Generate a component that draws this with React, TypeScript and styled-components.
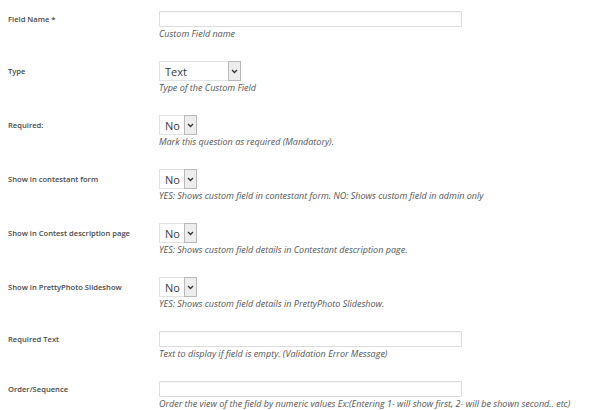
import styled, { createGlobalStyle } from "styled-components";

const GlobalStyle = createGlobalStyle`
  body {
    margin: 0;
    background: #ffffff;
    font-family: "Open Sans", "DejaVu Sans", sans-serif;
  }
`;

type FieldRow = {
  label: string;
  kind: "input" | "select";
  value?: string;
  width: number;
  help: string;
};

const rows: FieldRow[] = [
  { label: "Field Name *", kind: "input", width: 303, help: "Custom Field name" },
  { label: "Type", kind: "select", value: "Text", width: 82, help: "Type of the Custom Field" },
  { label: "Required:", kind: "select", value: "No", width: 38, help: "Mark this question as required (Mandatory)." },
  {
    label: "Show in contestant form",
    kind: "select",
    value: "No",
    width: 38,
    help: "YES: Shows custom field in contestant form. NO: Shows custom field in admin only",
  },
  {
    label: "Show in Contest description page",
    kind: "select",
    value: "No",
    width: 38,
    help: "YES: Shows custom field details in Contestant description page.",
  },
  {
    label: "Show in PrettyPhoto Slideshow",
    kind: "select",
    value: "No",
    width: 38,
    help: "YES: Shows custom field details in PrettyPhoto Slideshow.",
  },
  {
    label: "Required Text",
    kind: "input",
    width: 303,
    help: "Text to display if field is empty. (Validation Error Message)",
  },
  {
    label: "Order/Sequence",
    kind: "input",
    width: 303,
    help: "Order the view of the field by numeric values Ex:(Entering 1- will show first, 2- will be shown second.. etc)",
  },
];

function Chevron() {
  return (
    <svg width="7" height="5" viewBox="0 0 7 5">
      <path d="M1 1 L3.5 3.5 L6 1" fill="none" stroke="#333" strokeWidth="1.3" />
    </svg>
  );
}

export default function App() {
  return (
    <>
      <GlobalStyle />
      <Form>
        {rows.map((row) => (
          <Row key={row.label}>
            <Label>{row.label}</Label>
            {row.kind === "input" ? (
              <TextInput type="text" $width={row.width} />
            ) : (
              <SelectBox $width={row.width}>
                <SelectValue>{row.value}</SelectValue>
                <ArrowBox>
                  <Chevron />
                </ArrowBox>
              </SelectBox>
            )}
            <Help>{row.help}</Help>
          </Row>
        ))}
      </Form>
    </>
  );
}

const Form = styled.div`
  padding: 11px 0 0 8px;
`;

const Row = styled.div`
  display: grid;
  grid-template-columns: 151px auto;
  grid-template-areas:
    "label control"
    ". help";
  align-items: center;
  margin-bottom: 20px;
`;

const Label = styled.div`
  grid-area: label;
  font-size: 7.6px;
  font-weight: 600;
  color: #4a4a4a;
`;

const TextInput = styled.input<{ $width: number }>`
  grid-area: control;
  box-sizing: border-box;
  width: ${(p) => p.$width}px;
  height: 16px;
  margin: 0;
  padding: 0 4px;
  border: 1px solid #dcdcdc;
  border-radius: 1px;
  box-shadow: inset 0 1px 1px rgba(0, 0, 0, 0.04);
  background: #fff;
`;

const SelectBox = styled.div<{ $width: number }>`
  grid-area: control;
  box-sizing: border-box;
  width: ${(p) => p.$width}px;
  height: 20px;
  display: flex;
  align-items: center;
  border: 1px solid #e2e2e2;
  background: #fff;
`;

const SelectValue = styled.span`
  flex: 1;
  padding-left: 5px;
  font-size: 11px;
  color: #3a3a3a;
`;

const ArrowBox = styled.div`
  box-sizing: border-box;
  width: 13px;
  height: 20px;
  margin-right: -1px;
  display: flex;
  align-items: center;
  justify-content: center;
  background: #ededed;
  border: 1px solid #b9b9b9;
`;

const Help = styled.div`
  grid-area: help;
  font-size: 9px;
  line-height: 14px;
  font-style: italic;
  color: #555;
  white-space: nowrap;
`;
